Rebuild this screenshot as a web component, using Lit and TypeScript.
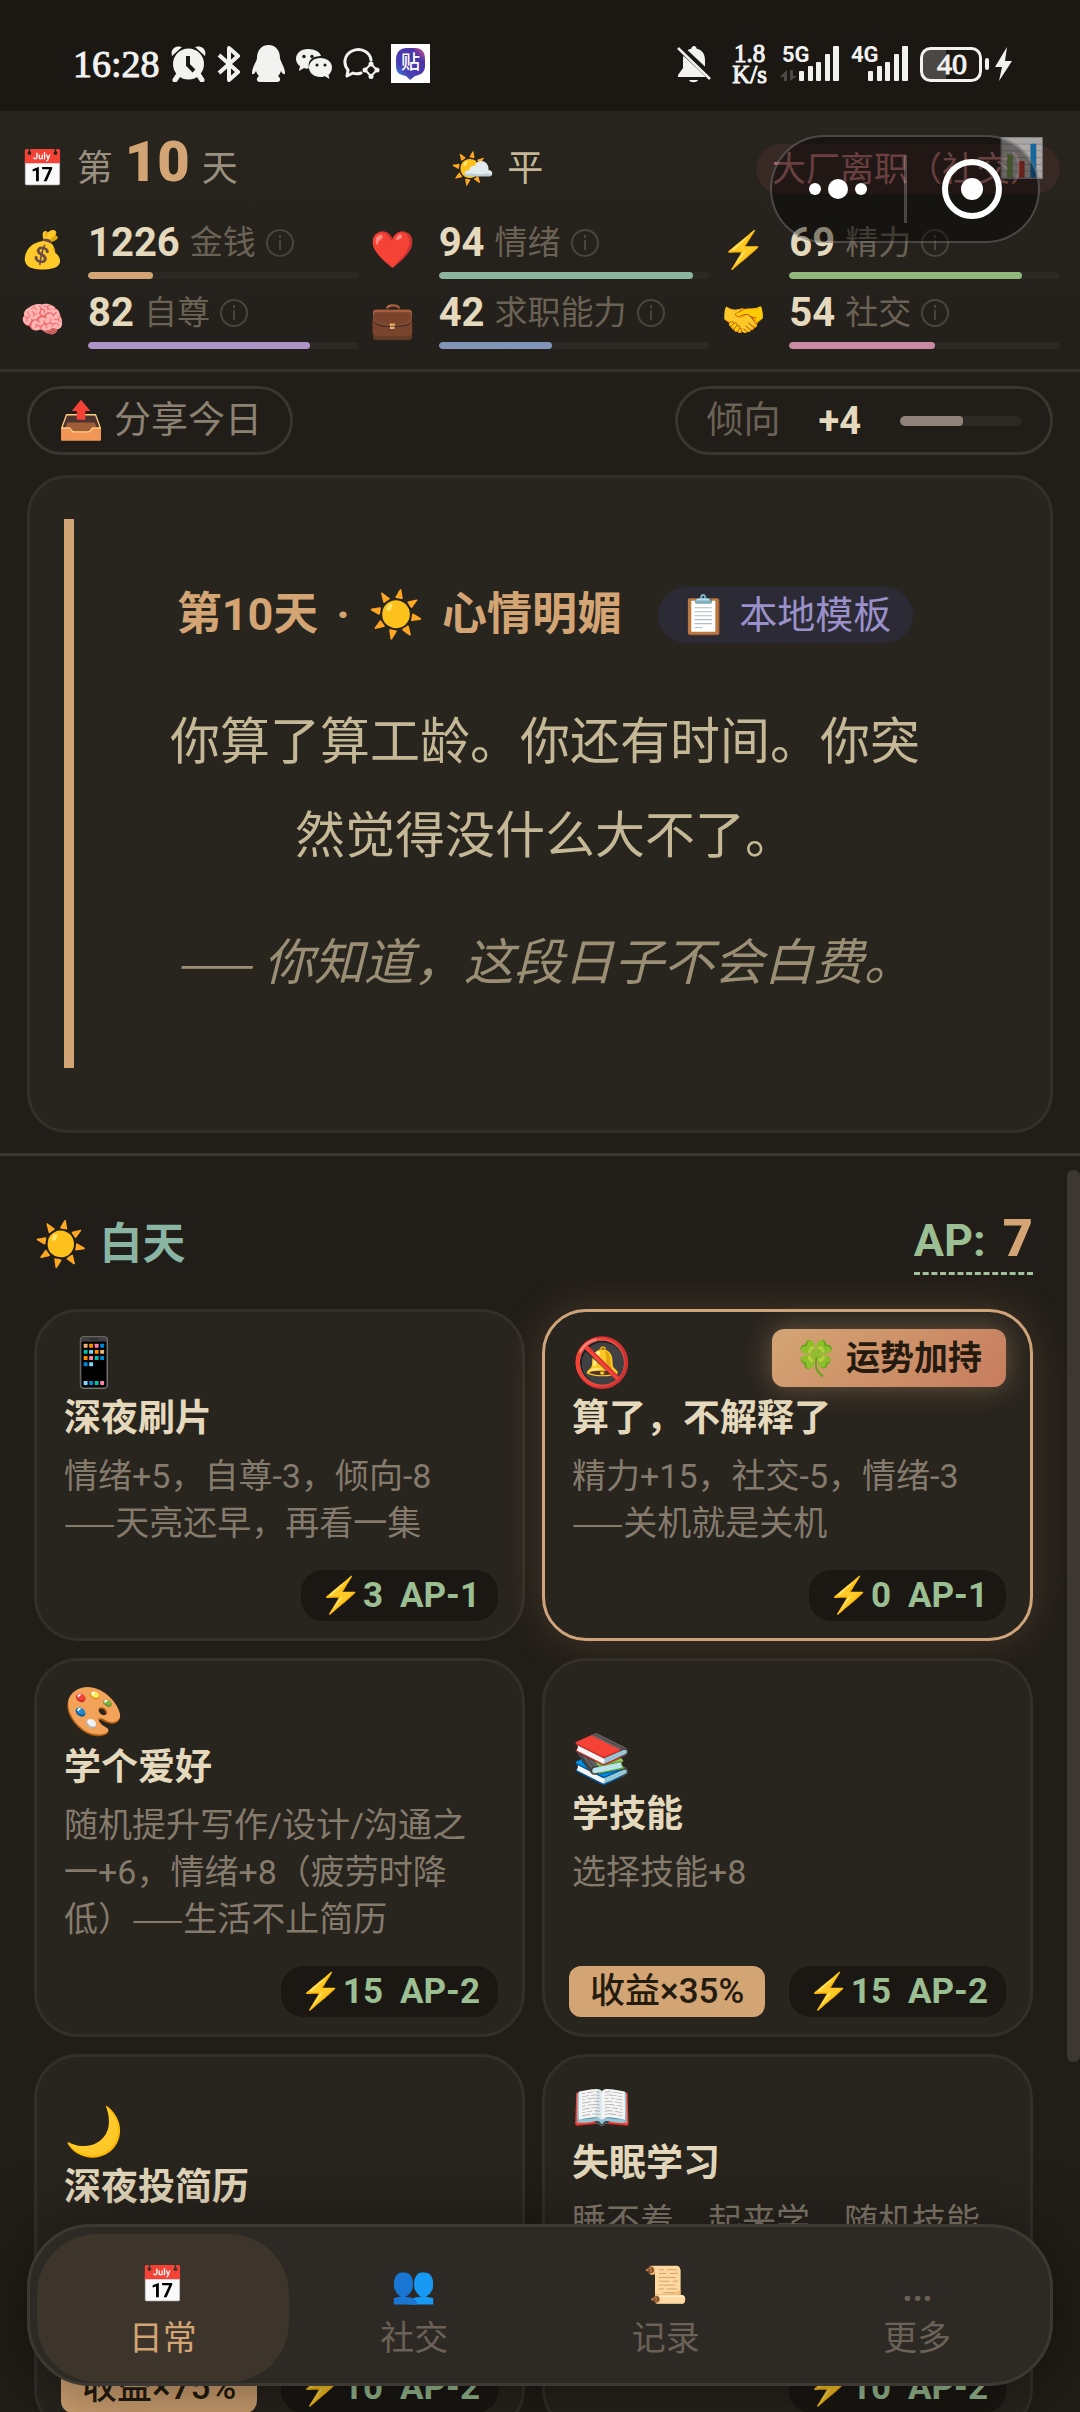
import { LitElement, html, css, svg, nothing } from "lit";
import { customElement, property, state } from "lit/decorators.js";
import { classMap } from "lit/directives/class-map.js";
import { styleMap } from "lit/directives/style-map.js";

interface Stat {
  icon: string;
  value: number;
  label: string;
  percent: number;
  color: string;
}

interface Action {
  icon: string;
  title: string;
  desc: string;
  energy: number;
  ap: number;
  yield?: string;
  lucky?: boolean;
  lines?: number;
}

const STATS: Stat[] = [
  { icon: "💰", value: 1226, label: "金钱", percent: 24, color: "#d4a574" },
  { icon: "❤️", value: 94, label: "情绪", percent: 94, color: "#8ab5a0" },
  { icon: "⚡", value: 69, label: "精力", percent: 86, color: "#8fb87a" },
  { icon: "🧠", value: 82, label: "自尊", percent: 82, color: "#ac94c9" },
  { icon: "💼", value: 42, label: "求职能力", percent: 42, color: "#8094ba" },
  { icon: "🤝", value: 54, label: "社交", percent: 54, color: "#c98ba2" },
];

const ACTIONS: Action[] = [
  { icon: "📱", title: "深夜刷片", desc: "情绪+5，自尊-3，倾向-8\n——天亮还早，再看一集", energy: 3, ap: 1 },
  { icon: "🔕", title: "算了，不解释了", desc: "精力+15，社交-5，情绪-3\n——关机就是关机", energy: 0, ap: 1, lucky: true },
  { icon: "🎨", title: "学个爱好", desc: "随机提升写作/设计/沟通之一+6，情绪+8（疲劳时降低）——生活不止简历", energy: 15, ap: 2 },
  { icon: "📚", title: "学技能", desc: "选择技能+8", energy: 15, ap: 2, yield: "收益×35%" },
  { icon: "🌙", title: "深夜投简历", desc: "", energy: 10, ap: 2, yield: "收益×75%", lines: 2 },
  { icon: "📖", title: "失眠学习", desc: "睡不着，起来学，随机技能", energy: 10, ap: 2, lines: 3 },
];

const TABS = [
  { icon: "📅", label: "日常" },
  { icon: "👥", label: "社交" },
  { icon: "📜", label: "记录" },
  { icon: "…", label: "更多" },
];

const DASH = "——";

const dashStyles = css`
  .dash {
    font-family: "Noto Sans CJK SC", sans-serif;
    font-size: 0.9em;
    line-height: 1;
  }
`;

/** Renders the double dash a size smaller so that it reads as one short rule. */
function withDash(text: string) {
  const [before, after] = text.split(DASH);
  return after === undefined ? text : html`${before}<span class="dash">${DASH}</span>${after}`;
}

@customElement("action-card")
class ActionCard extends LitElement {
  @property({ attribute: false }) action!: Action;

  static styles = [
    dashStyles,
    css`
      :host {
        display: grid;
        min-width: 0;
      }
      .card {
        position: relative;
        display: flex;
        flex-direction: column;
        box-sizing: border-box;
        min-width: 0;
        margin: 0;
        padding: 23px 24px 17px;
        border: 3px solid #342f29;
        border-radius: 44px;
        background: #28241e;
        color: #857b6d;
        font: inherit;
        text-align: left;
        cursor: pointer;
      }
      .lucky {
        border-color: #d0a47a;
        box-shadow: 0 0 44px rgba(212, 165, 116, 0.2);
      }
      .main {
        display: flex;
        flex: 1;
        flex-direction: column;
        justify-content: center;
        padding: 0 3px;
      }
      .icon {
        font-size: 48px;
        line-height: 56px;
      }
      .title {
        margin-top: 6px;
        color: #e4d9bd;
        font-size: 37px;
        font-weight: 700;
        line-height: 44px;
      }
      .desc {
        margin-top: 12px;
        font-size: 34px;
        font-weight: 400;
        line-height: 47px;
        white-space: pre-line;
      }
      .lines-2 {
        min-height: 94px;
      }
      .lines-3 {
        min-height: 141px;
      }
      .foot {
        display: flex;
        justify-content: flex-end;
        margin-top: 23px;
      }
      .yield,
      .cost {
        display: flex;
        align-items: center;
        height: 51px;
        font-size: 35px;
        line-height: 51px;
        white-space: nowrap;
      }
      .yield {
        margin-right: auto;
        padding: 0 21px;
        border-radius: 12px;
        background: #d4a574;
        color: #251c10;
        font-weight: 500;
      }
      .cost {
        gap: 17px;
        padding: 0 18px;
        border-radius: 22px;
        background: #1b1813;
        color: #9bbf93;
        font-weight: 700;
      }
      .badge {
        position: absolute;
        top: 17px;
        right: 24px;
        display: flex;
        align-items: center;
        gap: 8px;
        height: 58px;
        padding: 0 24px;
        border-radius: 12px;
        background: linear-gradient(135deg, #d4a574, #c77d5e);
        box-shadow: 0 0 28px rgba(212, 165, 116, 0.4);
        color: #251a10;
        font-size: 34px;
        font-weight: 700;
        line-height: 58px;
      }
    `,
  ];

  render() {
    const a = this.action;
    return html`
      <button class=${classMap({ card: true, lucky: !!a.lucky })}>
        <span class="main">
          <span class="icon">${a.icon}</span>
          <span class="title">${a.title}</span>
          <span class=${classMap({ desc: true, "lines-2": a.lines === 2, "lines-3": a.lines === 3 })}>${withDash(a.desc)}</span>
        </span>
        <span class="foot">
          ${a.yield ? html`<span class="yield">${a.yield}</span>` : nothing}
          <span class="cost"><span>⚡${a.energy}</span><span>AP-${a.ap}</span></span>
        </span>
        ${a.lucky ? html`<span class="badge"><span>🍀</span><span>运势加持</span></span>` : nothing}
      </button>
    `;
  }
}

const signalBars = svg`
  <rect x="0" y="25" width="5" height="10" rx="1"/>
  <rect x="9" y="20" width="5" height="15" rx="1"/>
  <rect x="17" y="16" width="5" height="19" rx="1"/>
  <rect x="26" y="8" width="5" height="27" rx="1"/>
  <rect x="34" y="0" width="6" height="35" rx="1"/>`;

@customElement("status-bar")
class StatusBar extends LitElement {
  static styles = css`
    :host {
      display: flex;
      align-items: center;
      justify-content: space-between;
      height: 111px;
      padding: 16px 67px 0 73px;
      box-sizing: border-box;
      background: #1b1813;
      color: #f2f2f0;
    }
    .group {
      display: flex;
      align-items: center;
      gap: 11px;
    }
    .time {
      font-family: "Liberation Serif", serif;
      font-size: 38px;
      line-height: 40px;
      -webkit-text-stroke: 1px currentColor;
    }
    svg {
      display: block;
      fill: currentColor;
    }
    .app {
      width: 39px;
      height: 39px;
      background: #fff;
    }
    .rate {
      display: flex;
      flex-direction: column;
      align-items: center;
      margin: 0 4px 0 10px;
      font-family: "Liberation Serif", serif;
      font-size: 25px;
      line-height: 21px;
      -webkit-text-stroke: 1px currentColor;
    }
    .network {
      display: flex;
      align-items: flex-start;
      height: 36px;
    }
    .gen {
      width: 17px;
      font-family: "Roboto", sans-serif;
      font-size: 22px;
      font-weight: 700;
      line-height: 18px;
    }
  `;

  render() {
    return html`
      <div class="group">
        <span class="time">16:28</span>
        <svg width="35" height="36" viewBox="0 0 35 36" aria-label="闹钟">
          <circle cx="17.500" cy="18" r="15.500"/>
          <path d="M1 10C-1 3 5-1 11 1zM34 10C36 3 30-1 24 1z"/>
          <path d="M8 28l-4 6M27 28l4 6" stroke="currentColor" stroke-width="5" stroke-linecap="round"/>
          <path d="M17 10v9l6 6" fill="none" stroke="#1b1813" stroke-width="4"/>
        </svg>
        <svg width="24" height="36" viewBox="0 0 24 36" aria-label="蓝牙">
          <path d="M2 9l19 17-9 8V2l9 8L2 27" fill="none" stroke="currentColor" stroke-width="4" stroke-linejoin="round"/>
        </svg>
        <svg width="33" height="37" viewBox="0 0 33 37" aria-label="QQ">
          <path d="M16.500 0C9 0 5 6 5 13c0 3-5 9-5 15 0 2 2 2 4-2 1 3 2 4 3 5-3 2-3 6 1 6h17c4 0 4-4 1-6 1-1 2-2 3-5 2 4 4 4 4 2 0-6-5-12-5-15C28 6 24 0 16.500 0z"/>
        </svg>
        <svg width="36" height="30" viewBox="0 0 36 30" aria-label="微信">
          <path d="M12 0C5 0 0 4 0 10c0 3 2 6 4 7l-1 5 5-3c2 1 3 1 5 0-2-8 4-12 12-12C24 3 19 0 12 0z"/>
          <path d="M24.500 9C18 9 13 13 13 18.500S18 28 24.500 28c2 0 3 0 4-1l5 3-1-4c2-2 3.500-4 3.500-7.500C36 13 31 9 24.500 9z"/>
          <g fill="#1b1813"><circle cx="8" cy="7.500" r="1.700"/><circle cx="16" cy="7.500" r="1.700"/><circle cx="21" cy="16" r="1.500"/><circle cx="29" cy="16" r="1.500"/></g>
        </svg>
        <svg width="37" height="32" viewBox="0 0 37 32" aria-label="企业微信">
          <path d="M18 25c-3 1-6 1-8 0l-6 3 1-6C0 16 1 7 9 3c9-4 18 1 19 9" fill="none" stroke="currentColor" stroke-width="3" stroke-linejoin="round" stroke-linecap="round"/>
          <path d="M28 16l6 6-6 6-6-6z" fill="none" stroke="currentColor" stroke-width="2"/>
          <circle cx="28" cy="16" r="2.500"/><circle cx="34" cy="22" r="2.500"/><circle cx="28" cy="28.500" r="2.500"/><circle cx="22" cy="22" r="2.500"/>
        </svg>
        <svg class="app" viewBox="0 0 39 39" aria-label="贴吧">
          <defs>
            <linearGradient id="blob" x1="0" y1="1" x2="1" y2="0">
              <stop offset="0" stop-color="#2aa4f5"/><stop offset="0.300" stop-color="#4a3fb5"/>
              <stop offset="0.750" stop-color="#4b35a8"/><stop offset="1" stop-color="#f0507a"/>
            </linearGradient>
          </defs>
          <path d="M16 4h8c7 0 10 4 10 11v7c0 6-4 9-10 10l-5 4-4-4C8 31 5 28 5 22v-6C5 8 9 4 16 4z" fill="url(#blob)"/>
          <text x="19.500" y="25" text-anchor="middle" font-size="19" font-weight="500" fill="#fff" font-family="Noto Sans CJK SC, sans-serif">贴</text>
        </svg>
      </div>
      <div class="group">
        <svg width="34" height="38" viewBox="0 0 34 38" aria-label="静音">
          <path d="M17 1c1.500 0 2.500 1 2.500 2.500C25 5 28 9 28 15v8l5 7v2H1v-2l5-7v-8c0-6 3-10 8.500-11.500C14.500 2 15.500 1 17 1z"/>
          <path d="M12 35h9c-1 3-8 3-9 0z"/>
          <path d="M0 0l34 32" stroke="#1b1813" stroke-width="7"/>
          <path d="M1 3l32 31" stroke="currentColor" stroke-width="2.500"/>
        </svg>
        <span class="rate"><span>1.8</span><span>K/s</span></span>
        <span class="network">
          <span class="gen">5G</span>
          <svg width="41" height="36" viewBox="0 0 41 36" overflow="visible">
            ${signalBars}
            <path d="M-12 24v11h-3v-4h-4zM-9 24v11l7-5h-4v-6z" fill="#4c4a46"/>
          </svg>
        </span>
        <span class="network">
          <span class="gen">4G</span>
          <svg width="41" height="36" viewBox="0 0 41 36">${signalBars}</svg>
        </span>
        <svg width="93" height="36" viewBox="0 0 93 36" aria-label="电量 40">
          <path d="M10 2h16v32H10a8 8 0 0 1-8-8V10a8 8 0 0 1 8-8z" fill="#4a4744"/>
          <rect x="1.500" y="2.500" width="59" height="32" rx="9" fill="none" stroke="currentColor" stroke-width="3"/>
          <rect x="65" y="12" width="4" height="12" rx="2"/>
          <text x="32" y="28" text-anchor="middle" font-size="30" font-family="Liberation Serif, serif" stroke="currentColor">40</text>
          <path d="M87 1L75 21h7l-3 14 13-20h-7z"/>
        </svg>
      </div>
    `;
  }
}

@customElement("app-root")
class AppRoot extends LitElement {
  @state() private tab = 0;

  static styles = [
    dashStyles,
    css`
      :host {
        position: relative;
        display: flex;
        flex-direction: column;
        height: 100vh;
        overflow: hidden;
        background: #211d18;
        color: #e4d9bd;
        font-family: "Roboto", "Noto Sans CJK SC", "Noto Color Emoji", sans-serif;
      }
      button {
        margin: 0;
        padding: 0;
        border: 0;
        background: none;
        color: inherit;
        font: inherit;
        cursor: pointer;
      }
      .header {
        position: relative;
        padding: 26px 20px 20px;
        border-bottom: 3px solid #35302a;
        background: linear-gradient(#28241e, #231f1a);
      }
      .summary {
        display: flex;
        align-items: center;
        justify-content: space-between;
        height: 64px;
        margin-bottom: 20px;
        color: #9a9080;
        font-size: 36px;
        line-height: 64px;
        white-space: nowrap;
      }
      .day {
        display: flex;
        align-items: baseline;
        gap: 12px;
        margin-bottom: 8px;
      }
      .day-number {
        color: #d4a574;
        font-size: 56px;
        font-weight: 900;
      }
      .weather {
        display: flex;
        gap: 12px;
        color: #c4b896;
      }
      .identity {
        padding: 0 16px;
        border-radius: 25px;
        background: #382925;
        color: #b06a6c;
        font-size: 34px;
        line-height: 50px;
      }
      .report {
        position: absolute;
        top: 22px;
        right: 34px;
        opacity: 0.6;
        font-size: 38px;
        line-height: 50px;
      }
      .stats {
        display: grid;
        grid-template-columns: repeat(3, 1fr);
        gap: 12px;
      }
      .stat {
        display: grid;
        grid-template-columns: 68px 1fr;
        align-items: center;
      }
      .stat-icon {
        font-size: 36px;
        line-height: 58px;
      }
      .stat-line {
        display: flex;
        align-items: center;
        gap: 10px;
        height: 44px;
        margin-bottom: 7px;
        color: #6b6256;
        font-size: 33px;
        line-height: 44px;
        white-space: nowrap;
      }
      .stat-value {
        color: #e4d9bd;
        font-size: 40px;
        font-weight: 700;
      }
      .info svg {
        display: block;
      }
      .track {
        overflow: hidden;
        height: 7px;
        border-radius: 4px;
        background: #2c2924;
      }
      .fill {
        height: 100%;
        border-radius: 4px;
      }
      .toolbar {
        display: flex;
        justify-content: space-between;
        padding: 14px 27px 20px;
        font-size: 37px;
        line-height: 60px;
      }
      .share,
      .trend {
        display: flex;
        align-items: center;
        box-sizing: border-box;
        height: 69px;
        border: 3px solid #3a362f;
        border-radius: 35px;
      }
      .share {
        gap: 10px;
        padding: 0 28px;
        color: #8b8273;
      }
      .trend {
        padding: 0 28px;
        color: #6b6256;
      }
      .trend-value {
        margin: 0 39px 0 38px;
        color: #e4d9bd;
        font-size: 38px;
        font-weight: 700;
      }
      .trend .track {
        width: 122px;
        height: 10px;
        border-radius: 5px;
      }
      .trend .fill {
        background: #8e8279;
      }
      .story {
        margin: 0 27px 20px;
        padding: 41px 34px 62px;
        border: 3px solid #342f29;
        border-radius: 40px;
        background: #28241e;
      }
      .quote {
        padding: 68px 74px 58px;
        border-left: 10px solid #d4a574;
        color: #c4b896;
        font-size: 50px;
        line-height: 94px;
        text-align: center;
      }
      .story-head {
        display: flex;
        align-items: center;
        justify-content: center;
        gap: 36px;
        margin: 0 -20px 52px;
        line-height: 56px;
        white-space: nowrap;
      }
      .story-title {
        display: flex;
        gap: 18px;
        margin: 0;
        color: #d4a574;
        font-size: 45px;
        font-weight: 700;
      }
      .source {
        display: flex;
        gap: 12px;
        padding: 0 22px;
        border-radius: 28px;
        background: #2b2a35;
        color: #9a91cb;
        font-size: 38px;
      }
      .quote p {
        margin: 0;
      }
      .quote .ending {
        margin-top: 33px;
        color: #9a8f75;
        font-style: italic;
      }
      .actions {
        position: relative;
        flex: 1;
        min-height: 0;
        overflow: hidden;
        border-top: 3px solid #3b372f;
        padding: 53px 47px 0 34px;
      }
      .actions-head {
        display: flex;
        align-items: center;
        justify-content: space-between;
        height: 66px;
        margin-bottom: 34px;
        line-height: 60px;
      }
      .phase {
        display: flex;
        gap: 12px;
        margin: 0;
        padding-top: 4px;
        color: #8ab5a5;
        font-size: 43px;
        font-weight: 700;
      }
      .points {
        box-sizing: border-box;
        height: 66px;
        border-bottom: 3px dashed #a3c29a;
        color: #9bbf93;
        font-size: 45px;
        font-weight: 700;
        line-height: 60px;
      }
      .points-value {
        margin-left: 6px;
        color: #d4a574;
        font-size: 52px;
        font-weight: 900;
        line-height: 52px;
      }
      .cards {
        display: grid;
        grid-template-columns: repeat(2, minmax(0, 1fr));
        gap: 17px;
      }
      .scroll-thumb {
        position: absolute;
        top: 14px;
        right: 0;
        width: 13px;
        height: 71%;
        border-radius: 6px;
        background: #3c3831;
      }
      .nav {
        position: absolute;
        right: 27px;
        bottom: 26px;
        left: 27px;
        display: grid;
        grid-template-columns: repeat(4, 1fr);
        padding: 7px 7px 1px;
        border: 3px solid #3d3932;
        border-radius: 64px;
        background: #2d2a25;
        box-shadow: 0 8px 80px rgba(0, 0, 0, 0.45);
      }
      .tab {
        display: flex;
        flex-direction: column;
        align-items: center;
        height: 148px;
        padding-top: 27px;
        box-sizing: border-box;
        border-radius: 60px;
        color: #6b6156;
        font-size: 34px;
        line-height: 48px;
      }
      .tab.active {
        background: #3d342b;
        color: #d4a574;
      }
      .tab-icon {
        margin-bottom: 5px;
        font-size: 36px;
      }
      .tab:last-child .tab-icon {
        font-size: 48px;
      }
      .capsule {
        position: absolute;
        top: 135px;
        right: 40px;
        display: flex;
        align-items: center;
        box-sizing: border-box;
        width: 270px;
        height: 108px;
        border: 2px solid rgba(255, 255, 255, 0.22);
        border-radius: 54px;
        background: rgba(0, 0, 0, 0.4);
      }
      .capsule button {
        display: grid;
        flex: 1;
        height: 100%;
        place-items: center;
      }
      .capsule-line {
        width: 3px;
        height: 68px;
        background: rgba(255, 255, 255, 0.22);
      }
    `,
  ];

  private renderStat(s: Stat) {
    return html`
      <div class="stat">
        <span class="stat-icon">${s.icon}</span>
        <div>
          <div class="stat-line">
            <span class="stat-value">${s.value}</span>
            <span>${s.label}</span>
            <button class="info" aria-label=${s.label}>
              <svg width="28" height="28" viewBox="0 0 28 28" fill="none" stroke="#4b443c" stroke-width="2">
                <circle cx="14" cy="14" r="13"/>
                <path d="M14 11v10M14 6v3"/>
              </svg>
            </button>
          </div>
          <div class="track">
            <div class="fill" style=${styleMap({ width: `${s.percent}%`, background: s.color })}></div>
          </div>
        </div>
      </div>
    `;
  }

  render() {
    return html`
      <status-bar></status-bar>
      <header class="header">
        <div class="summary">
          <div class="day">
            <span>📅</span><span>第</span><span class="day-number">10</span><span>天</span>
          </div>
          <div class="weather"><span>🌤️</span><span>平</span></div>
          <div class="identity">大厂离职（社交）</div>
        </div>
        <div class="stats">${STATS.map((s) => this.renderStat(s))}</div>
        <button class="report">📊</button>
      </header>

      <div class="toolbar">
        <button class="share"><span>📤</span><span>分享今日</span></button>
        <div class="trend">
          <span>倾向</span>
          <span class="trend-value">+4</span>
          <div class="track"><div class="fill" style=${styleMap({ width: "52%" })}></div></div>
        </div>
      </div>

      <section class="story">
        <div class="quote">
          <div class="story-head">
            <h1 class="story-title"><span>第10天</span><span>·</span><span>☀️</span><span>心情明媚</span></h1>
            <span class="source"><span>📋</span><span>本地模板</span></span>
          </div>
          <p>你算了算工龄。你还有时间。你突然觉得没什么大不了。</p>
          <p class="ending">${withDash("—— 你知道，这段日子不会白费。")}</p>
        </div>
      </section>

      <section class="actions">
        <div class="actions-head">
          <h2 class="phase"><span>☀️</span><span>白天</span></h2>
          <button class="points">AP: <span class="points-value">7</span></button>
        </div>
        <div class="cards">
          ${ACTIONS.map((a) => html`<action-card .action=${a}></action-card>`)}
        </div>
        <div class="scroll-thumb"></div>
      </section>

      <nav class="nav">
        ${TABS.map(
          (t, i) => html`
            <button class=${classMap({ tab: true, active: i === this.tab })} @click=${() => (this.tab = i)}>
              <span class="tab-icon">${t.icon}</span>
              <span>${t.label}</span>
            </button>
          `,
        )}
      </nav>

      <div class="capsule">
        <button aria-label="更多">
          <svg width="60" height="24" viewBox="0 0 60 24" fill="#fff">
            <circle cx="7" cy="12" r="6"/><circle cx="30" cy="12" r="10"/><circle cx="53" cy="12" r="6"/>
          </svg>
        </button>
        <span class="capsule-line"></span>
        <button aria-label="关闭">
          <svg width="60" height="60" viewBox="0 0 60 60">
            <circle cx="30" cy="30" r="27" fill="none" stroke="#fff" stroke-width="6"/>
            <circle cx="30" cy="30" r="11" fill="#fff"/>
          </svg>
        </button>
      </div>
    `;
  }
}
